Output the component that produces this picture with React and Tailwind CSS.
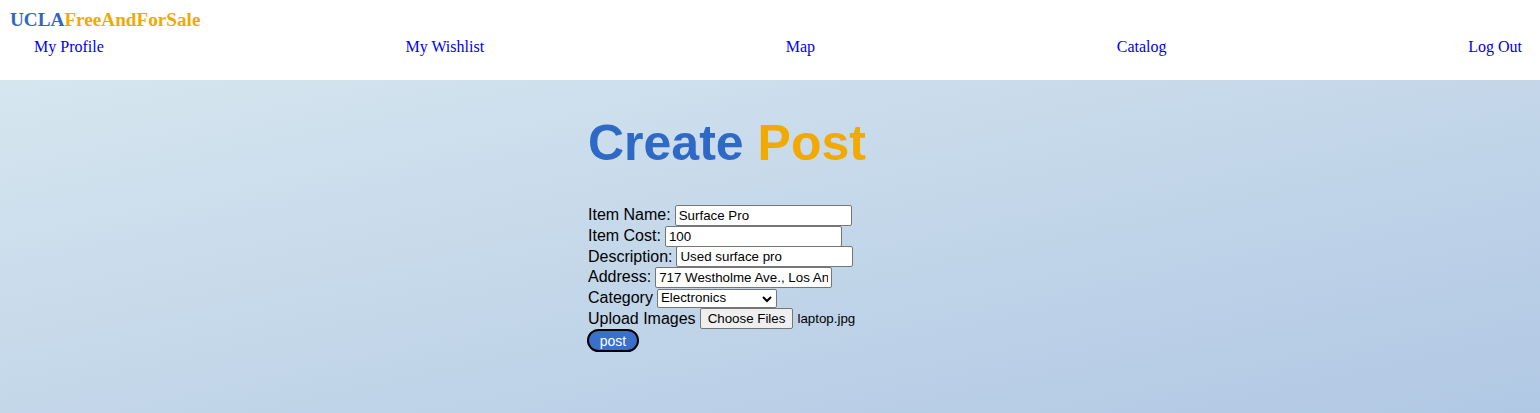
import React from "react";

const inputClass =
  "h-[21px] border border-[#767676] rounded-[2px] bg-white px-[3px] text-[13.33px] text-black align-middle outline-none";

const Row = ({ label, children }) => (
  <div className="flex items-center h-[20.7px] gap-[4px]">
    <span>{label}</span>
    {children}
  </div>
);

export default function App() {
  return (
    <div className="min-h-screen flex flex-col font-['Liberation_Serif',serif]">
      <header className="h-[80px] bg-white flex flex-col">
        <div className="pl-[10px] pt-[9px] text-[19.2px] font-bold leading-[22px]">
          <span className="text-[#3266c6]">UCLA</span>
          <span className="text-[#f2a900]">FreeAndForSale</span>
        </div>
        <nav className="flex justify-between pl-[34px] pr-[18px] mt-[7px] text-[16px] leading-[18px] text-[#0000ee]">
          <a href="#">My Profile</a>
          <a href="#">My Wishlist</a>
          <a href="#">Map</a>
          <a href="#">Catalog</a>
          <a href="#">Log Out</a>
        </nav>
      </header>

      <main className="flex-1 h-[333px] bg-gradient-to-br from-[#d6e6ef] to-[#b1c8e4] flex justify-center font-['Liberation_Sans',Arial,sans-serif]">
        <div className="w-[364px] pt-[30px]">
          <h1 className="text-[50px] font-bold leading-[66px] text-[#2f69c6]">
            Create <span className="text-[#f2a900]">Post</span>
          </h1>

          <form className="mt-[29px] flex flex-col text-[16px] text-black leading-[18px]">
            <Row label="Item Name:">
              <input className={`${inputClass} w-[177px]`} defaultValue="Surface Pro" />
            </Row>
            <Row label="Item Cost:">
              <input className={`${inputClass} w-[177px]`} defaultValue="100" />
            </Row>
            <Row label="Description:">
              <input className={`${inputClass} w-[177px]`} defaultValue="Used surface pro" />
            </Row>
            <Row label="Address:">
              <input
                className={`${inputClass} w-[177px]`}
                defaultValue="717 Westholme Ave., Los Angeles"
              />
            </Row>
            <Row label="Category">
              <div className="relative h-[19px] w-[120px] border border-[#767676] rounded-[2px] bg-white text-[13.33px] flex items-center pl-[3px]">
                <span>Electronics</span>
                <svg
                  className="absolute right-[4px] top-[5px]"
                  width="10"
                  height="8"
                  viewBox="0 0 10 8"
                >
                  <path d="M1 2 L5 6 L9 2" stroke="#000" strokeWidth="2" fill="none" />
                </svg>
              </div>
            </Row>
            <Row label="Upload Images">
              <div className="flex items-center gap-[4px] text-[13.33px]">
                <button
                  type="button"
                  className="h-[21px] px-[7px] border border-[#767676] rounded-[2px] bg-[#efefef] text-[13.33px]"
                >
                  Choose Files
                </button>
                <span>laptop.jpg</span>
              </div>
            </Row>
            <div className="-ml-[1px]">
              <button
                type="button"
                className="h-[23px] w-[52px] rounded-full border-2 border-black bg-[#3a6fcb] text-white text-[14px] leading-[18px]"
              >
                post
              </button>
            </div>
          </form>
        </div>
      </main>
    </div>
  );
}
